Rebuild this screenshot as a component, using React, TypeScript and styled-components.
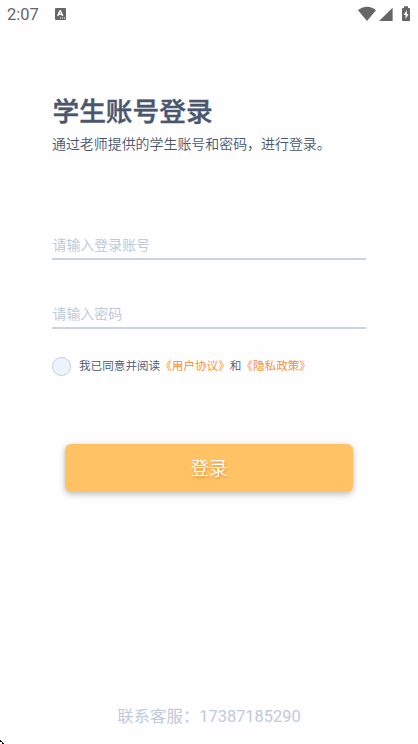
import React from "react";
import styled, { createGlobalStyle } from "styled-components";

const GlobalStyle = createGlobalStyle`
  * { box-sizing: border-box; }
  body {
    margin: 0;
    background: #fefefe;
    font-family: Roboto, "Noto Sans CJK SC", sans-serif;
    overflow: hidden;
  }
`;

const Screen = styled.main`
  width: 418px;
  height: 744px;
  display: flex;
  flex-direction: column;
  position: relative;
  overflow: hidden;
  color: #4a566e;
`;

const StatusBar = styled.header`
  height: 28px;
  flex: none;
  display: flex;
  align-items: center;
  padding: 0 7px;
  color: #666;
`;

const Clock = styled.span`
  width: 47px;
  font-size: 16.5px;
  line-height: 20px;
  padding-top: 1px;
`;

const StatusIcons = styled.div`
  margin-left: auto;
  display: flex;
  align-items: center;
`;

const Heading = styled.section`
  height: 204px;
  flex: none;
  padding: 65px 52px 0;
`;

const Title = styled.h1`
  margin: 0;
  padding-left: 0.5px;
  font-size: 26.7px;
  line-height: 38px;
  font-weight: 500;
  -webkit-text-stroke: 0.4px currentColor;
  white-space: nowrap;
`;

const Subtitle = styled.p`
  margin: 3px 0 0;
  font-size: 13.95px;
  line-height: 20px;
  font-weight: 350;
  white-space: nowrap;
`;

const Form = styled.form`
  flex: 1;
  display: flex;
  flex-direction: column;
  padding: 0 52px;
`;

const Field = styled.input`
  height: 28px;
  flex: none;
  margin: 0 0 41px;
  padding: 0 0 0 0.5px;
  border: 0;
  border-bottom: 2px solid #cbd3e3;
  border-radius: 0;
  background: transparent;
  outline: none;
  font: 350 13.95px Roboto, "Noto Sans CJK SC", sans-serif;
  color: #4a566e;
  &::placeholder { color: #b9c5d8; opacity: 1; }
`;

const Agreement = styled.div`
  height: 19px;
  margin-top: -13px;
  display: flex;
  align-items: center;
  font-size: 11.6px;
  line-height: 19px;
  font-weight: 350;
  white-space: nowrap;
`;

const Radio = styled.span`
  width: 19px;
  height: 19px;
  flex: none;
  margin-right: 8px;
  border: 1px solid #c4cfdf;
  border-radius: 50%;
  background: #edf4ff;
`;

const PolicyLink = styled.span`
  color: #fb862a;
`;

const LoginButton = styled.button`
  height: 48px;
  margin: 68px 13px 0;
  padding: 0 0 3px;
  border: 0;
  border-radius: 6px;
  background: #ffc366;
  box-shadow: 0 2px 6px rgba(0, 0, 0, 0.28);
  font: 350 18.6px Roboto, "Noto Sans CJK SC", sans-serif;
  color: #fff;
  text-shadow: 1px 2px 2px rgba(226, 105, 30, 0.5);
`;

const Support = styled.footer`
  height: 24px;
  margin-bottom: 15px;
  text-align: center;
  font-size: 16.4px;
  line-height: 24px;
  color: #c0cadb;
`;

const CornerMark = styled.svg`
  position: absolute;
  left: 0;
  bottom: 0;
`;

export default function App() {
  return (
    <>
      <GlobalStyle />
      <Screen>
        <StatusBar>
          <Clock>2:07</Clock>
          <svg width="12" height="12" viewBox="0 0 12 12">
            <rect x="1" y="0" width="11" height="12" rx="1" fill="#666" />
            <path d="M3.7 8 5.8 3h.8L8.7 8M4.5 6.3H8" fill="none" stroke="#fff" strokeWidth="1.4" />
            <path d="M6 10h1M8 10h1M10 10h1" stroke="#fff" strokeWidth="1" />
          </svg>
          <StatusIcons>
            <svg width="53" height="16" viewBox="0 0 53 16" fill="#666">
              <path d="M0 4.2C2.6 1.9 5.6.7 9 .7s6.4 1.2 9 3.5L9 15Z" />
              <path d="M34.6 1.7V15H21.1Z" />
              <path d="M46 .3h4V2h1.2q.8 0 .8.8v11.5q0 .7-.8.7h-6.4q-.8 0-.8-.7V2.8q0-.8.8-.8H46Z" />
              <path d="M48.8 4 45.6 9h2v4l3-5h-1.8Z" fill="#fff" />
            </svg>
          </StatusIcons>
        </StatusBar>
        <Heading>
          <Title>学生账号登录</Title>
          <Subtitle>通过老师提供的学生账号和密码，进行登录。</Subtitle>
        </Heading>
        <Form onSubmit={(e: React.FormEvent) => e.preventDefault()}>
          <Field placeholder="请输入登录账号" />
          <Field type="password" placeholder="请输入密码" />
          <Agreement>
            <Radio />
            <span>我已同意并阅读</span>
            <PolicyLink>《用户协议》</PolicyLink>
            <span>和</span>
            <PolicyLink>《隐私政策》</PolicyLink>
          </Agreement>
          <LoginButton type="submit">登录</LoginButton>
        </Form>
        <Support>联系客服：17387185290</Support>
        <CornerMark width="4" height="4" viewBox="0 0 4 4">
          <path d="M0 0h1v1h1v1H0ZM2 2h1v1H2ZM3 3h1v1H2V3Z" fill="#111" />
        </CornerMark>
      </Screen>
    </>
  );
}
